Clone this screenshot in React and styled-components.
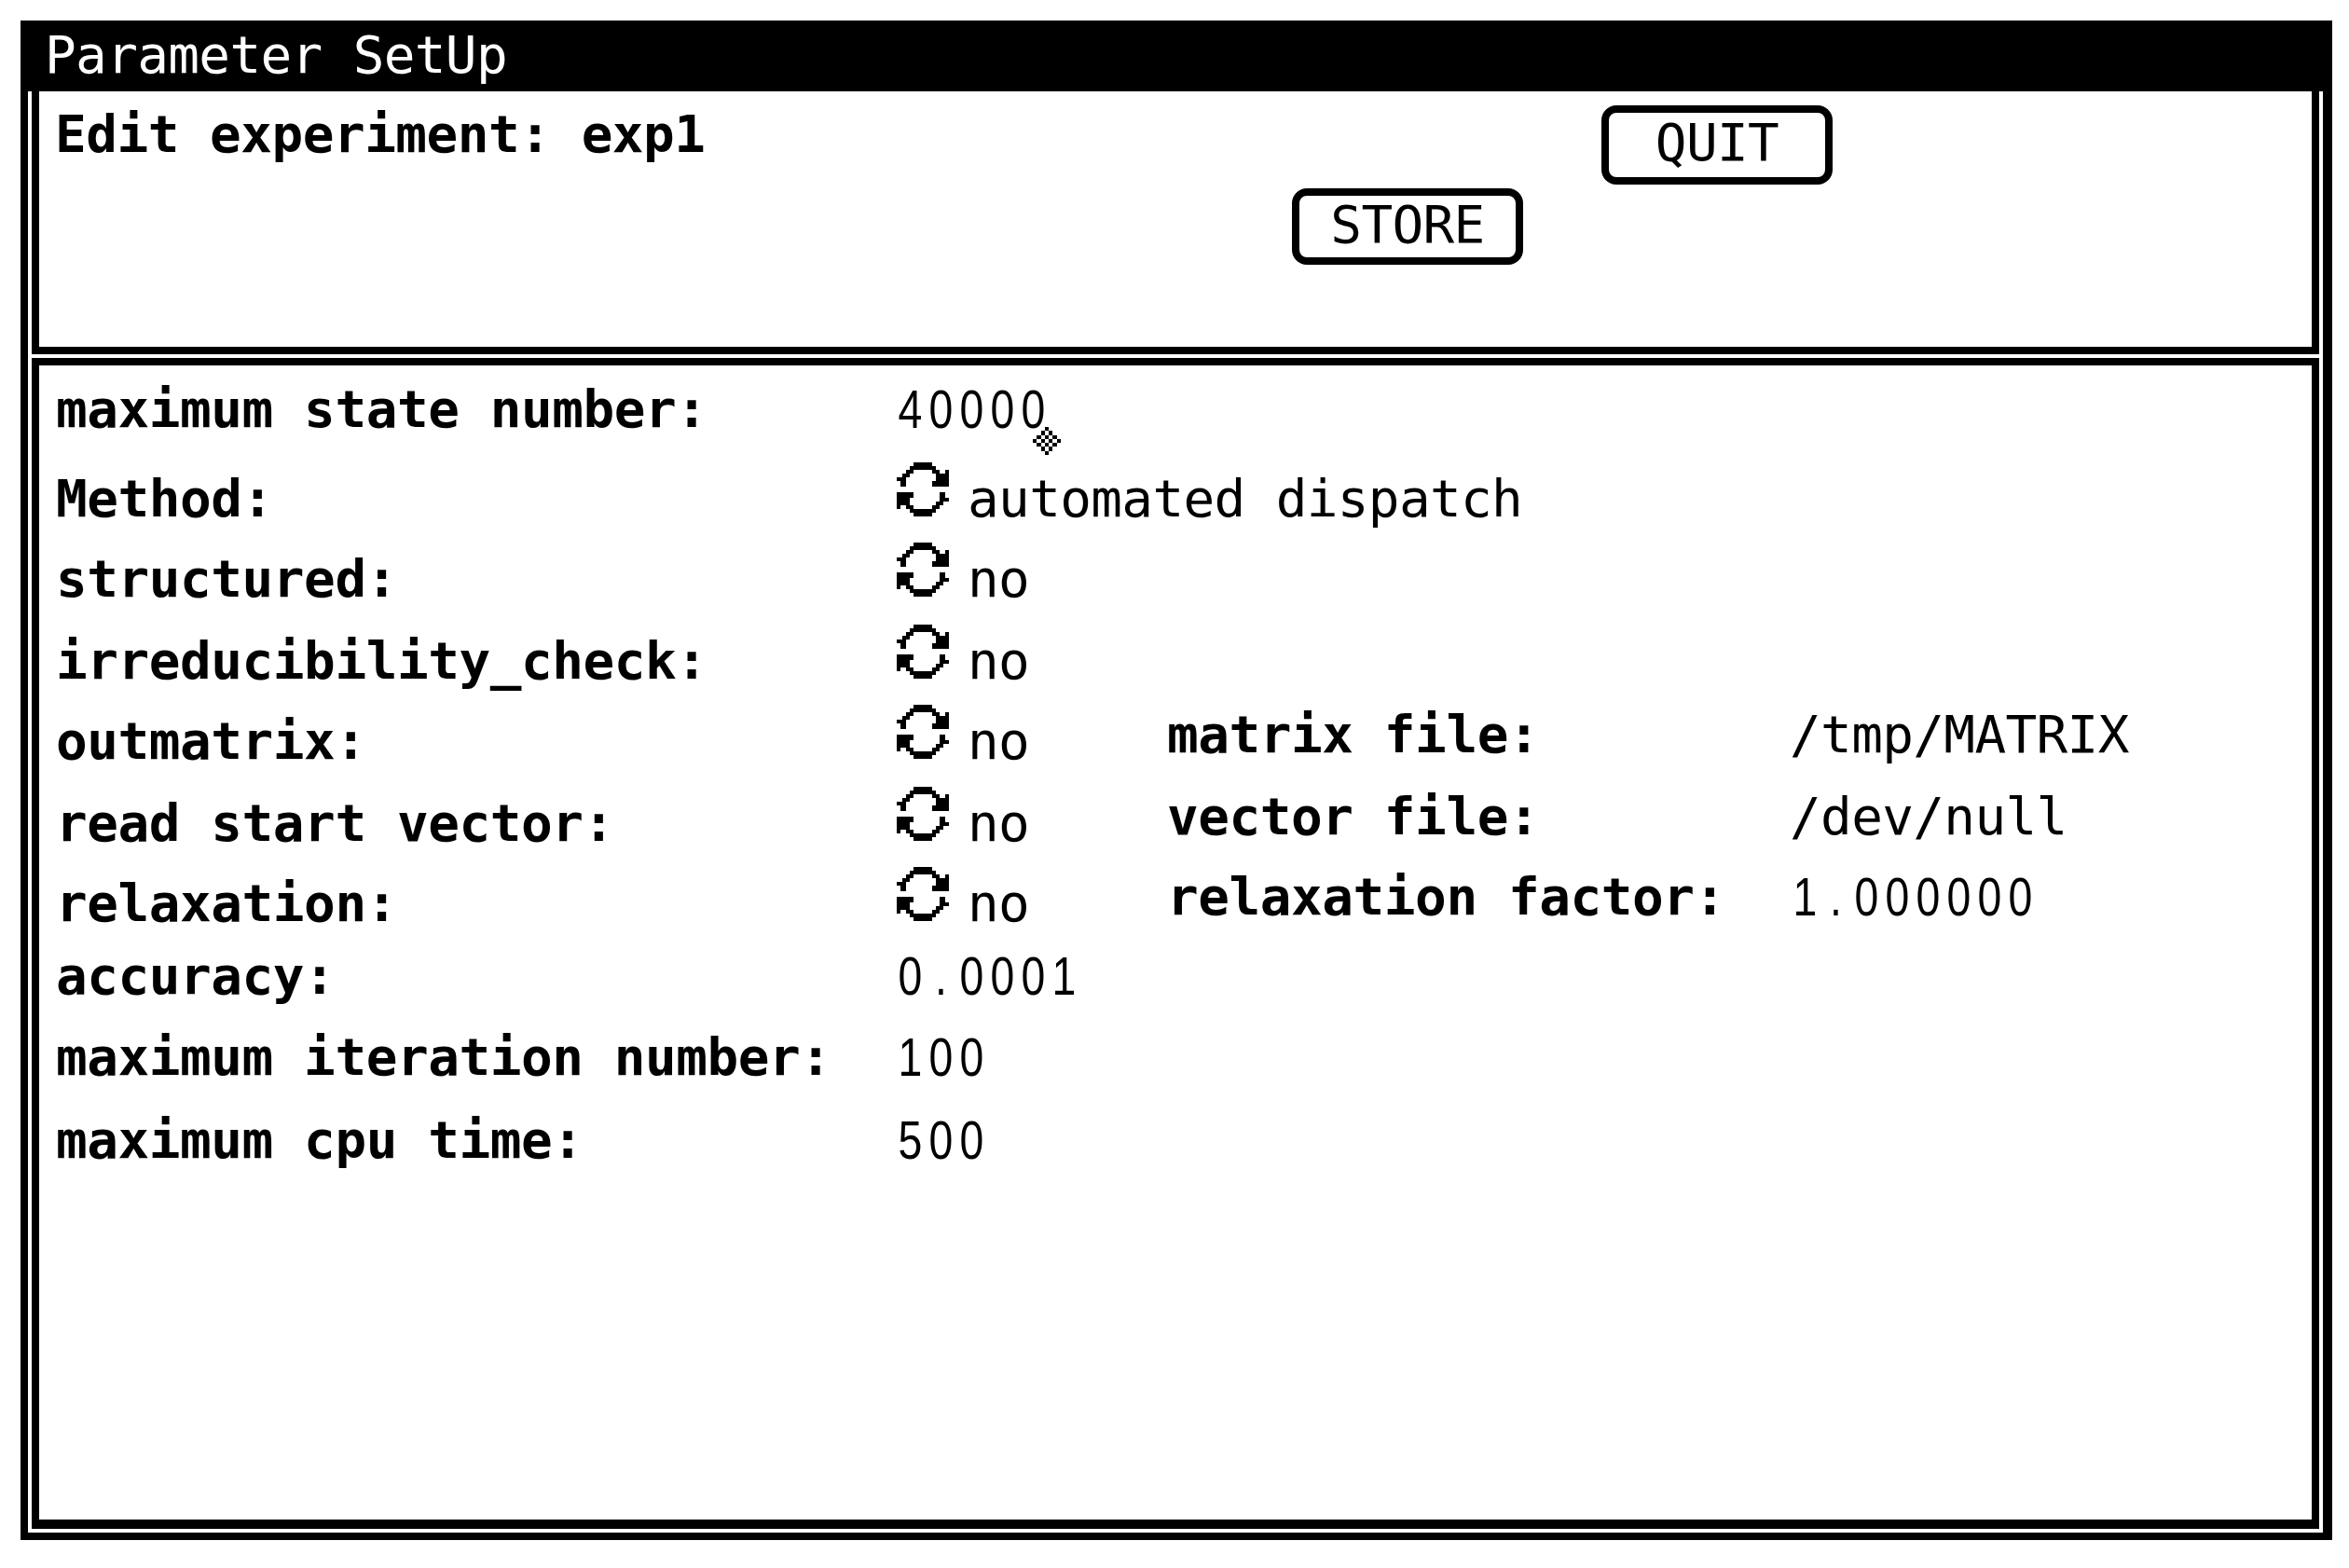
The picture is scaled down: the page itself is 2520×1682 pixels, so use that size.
import styled, { createGlobalStyle } from "styled-components";

const GlobalStyle = createGlobalStyle`
  html, body {
    margin: 0;
    background: #fff;
    color: #000;
  }
`;

const MONO = `"DejaVu Sans Mono", "Liberation Mono", monospace`;

const Page = styled.div`
  padding: 22px;
  width: 2480px;
`;

const Window = styled.div`
  position: relative;
  display: flex;
  flex-direction: column;
  height: 1630px;
  font-family: ${MONO};
  font-size: 56px;
  line-height: 60px;
  letter-spacing: -0.65px;
  white-space: pre;
`;

const TitleBar = styled.div`
  height: 76px;
  flex: none;
  box-sizing: border-box;
  padding: 7px 0 0 26px;
  background: #000;
  color: #fff;
`;

const Frame = styled.div`
  flex: 1;
  display: flex;
  flex-direction: column;
  gap: 4px;
  padding: 0 4px 4px;
  border: solid #000;
  border-width: 0 10px 8px 8px;
`;

const TopPane = styled.div`
  flex: none;
  height: 259px;
  display: grid;
  grid-template-columns: 1328px 248px 84px 248px;
  grid-template-rows: 85px 82px;
  row-gap: 4px;
  align-content: start;
  padding: 15px 0 0 16px;
  border: solid #000;
  border-width: 0 8px 8px;
`;

const Heading = styled.div`
  grid-column: 1;
  grid-row: 1 / 3;
  margin: 1px 0 0 1px;
  font-weight: 700;
  letter-spacing: -0.5px;
`;

const Button = styled.button`
  grid-column: ${(props) => props.$col};
  grid-row: ${(props) => props.$row};
  padding: 0 0 5px;
  margin: 0;
  border: 8px solid #000;
  border-radius: 16px;
  background: #fff;
  color: #000;
  font: inherit;
  letter-spacing: inherit;
`;

const FormPane = styled.div`
  flex: 1;
  padding: 17px 0 0 18px;
  border: solid #000;
  border-width: 8px 8px 10px;
`;

const Row = styled.div`
  display: grid;
  grid-template-columns: 900px 292px 668px 1fr;
  height: ${(props) => props.$h}px;
`;

const Label = styled.div`
  font-weight: 700;
  letter-spacing: -0.45px;
`;

const Value = styled.div`
  line-height: ${(props) => (props.$side ? "45px" : "60px")};
`;

const Choice = styled.div`
  display: flex;
  align-items: flex-start;
  gap: 20px;
  padding-left: 2px;
`;

const CycleIcon = styled.svg`
  flex: none;
  width: 56px;
  height: 58px;
  margin-top: -9px;
`;

const SideLabel = styled.div`
  font-weight: 700;
  letter-spacing: -0.45px;
  line-height: 45px;
`;

const DigitCell = styled.span`
  display: inline-block;
  width: 33px;
  text-align: center;
  font-family: "Liberation Sans", Arial, sans-serif;
  font-size: 58px;
  letter-spacing: 0;
  transform: scaleX(0.8);
`;

const PointerMark = styled.svg`
  position: absolute;
  left: 1086px;
  top: 436px;
  width: 30px;
  height: 30px;
`;

// upper half of the cycle glyph as [x, y, w, h] runs on the 14 x 14.5 bitmap
const CYCLE_RUNS = [
  [4.5, 0, 5, 1],
  [3.5, 1, 7, 1],
  [2.5, 2, 2, 1],
  [9.5, 2, 2, 1],
  [13, 2, 1, 1],
  [1.5, 3, 2, 1],
  [10.5, 3, 3.5, 1],
  [0, 4, 2.5, 1],
  [10.5, 4, 3.5, 1],
  [1, 5, 1.5, 1.5],
  [9.5, 5, 4.5, 1.5],
];

const cycleHalf = CYCLE_RUNS.map(([x, y, w, h]) => `M${x} ${y}h${w}v${h}h-${w}z`).join("");

const Cycle = () => (
  <CycleIcon viewBox="0 0 14 14.5" shapeRendering="crispEdges" aria-hidden="true">
    <path d={cycleHalf} />
    <path d={cycleHalf} transform="rotate(180 7 7.25)" />
  </CycleIcon>
);

// dithered diamond the pointer leaves on screen
const Pointer = () => {
  const cells = [];
  for (let r = 0; r < 7; r++) {
    for (let c = 0; c < 7; c++) {
      const d = Math.abs(r - 3) + Math.abs(c - 3);
      if (d === 1 || d === 3) cells.push(<rect key={`${r}-${c}`} x={c} y={r} width="1" height="1" />);
    }
  }
  return (
    <PointerMark viewBox="0 0 7 7" shapeRendering="crispEdges" aria-hidden="true">
      {cells}
    </PointerMark>
  );
};

const Digits = ({ text, side }) => (
  <Value $side={side}>
    {text.split("").map((ch, i) => (
      <DigitCell key={i}>{ch}</DigitCell>
    ))}
  </Value>
);

const rows = [
  { label: "maximum state number:", digits: "40000", h: 96 },
  { label: "Method:", choice: "automated dispatch", h: 86 },
  { label: "structured:", choice: "no", h: 88 },
  { label: "irreducibility_check:", choice: "no", h: 86 },
  { label: "outmatrix:", choice: "no", h: 88, side: "matrix file:", sideValue: "/tmp/MATRIX" },
  { label: "read start vector:", choice: "no", h: 86, side: "vector file:", sideValue: "/dev/null" },
  { label: "relaxation:", choice: "no", h: 78, side: "relaxation factor:", sideDigits: "1.000000" },
  { label: "accuracy:", digits: "0.0001", h: 87 },
  { label: "maximum iteration number:", digits: "100", h: 89 },
  { label: "maximum cpu time:", digits: "500", h: 60 },
];

const App = () => {
  return (
    <Page>
      <GlobalStyle />
      <Window>
        <TitleBar>Parameter SetUp</TitleBar>
        <Frame>
          <TopPane>
            <Heading>Edit experiment: exp1</Heading>
            <Button $col={4} $row={1}>QUIT</Button>
            <Button $col={2} $row={2}>STORE</Button>
          </TopPane>
          <FormPane>
            {rows.map((row) => (
              <Row key={row.label} $h={row.h}>
                <Label>{row.label}</Label>
                {row.digits && <Digits text={row.digits} />}
                {row.choice && (
                  <Choice>
                    <Cycle />
                    <span>{row.choice}</span>
                  </Choice>
                )}
                {row.side && <SideLabel>{row.side}</SideLabel>}
                {row.sideValue && <Value $side>{row.sideValue}</Value>}
                {row.sideDigits && <Digits text={row.sideDigits} side />}
              </Row>
            ))}
          </FormPane>
        </Frame>
        <Pointer />
      </Window>
    </Page>
  );
};

export default App;
